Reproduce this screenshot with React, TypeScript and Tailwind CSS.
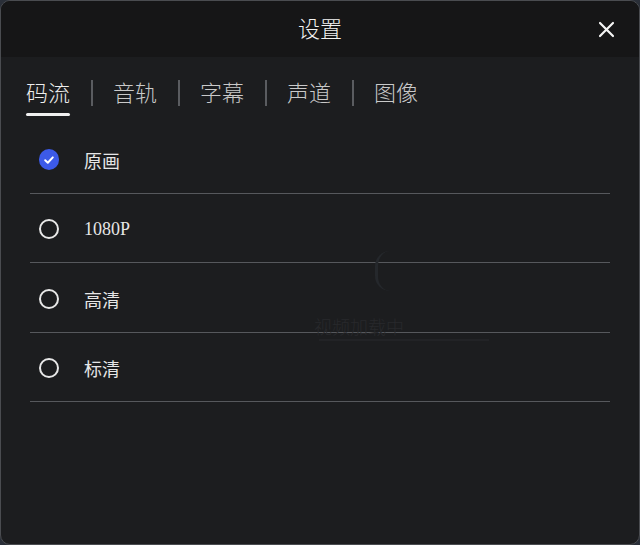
import React from "react";

const tabs = ["码流", "音轨", "字幕", "声道", "图像"];
const options = ["原画", "1080P", "高清", "标清"];

const cjk = { fontFamily: '"Noto Sans CJK SC", "Noto Sans", sans-serif' };

export default function App() {
  return (
    <div className="w-[640px] h-[545px] bg-[#2a2f38]">
      <div
        className="relative w-full h-full rounded-[10px] border border-[#4a4c50] bg-[#1c1d1f] overflow-hidden flex flex-col"
        style={cjk}
      >
        {/* faint background content */}
        <div className="absolute left-[374px] top-[250px] w-[30px] h-[40px] rounded-full border-l-[3px] border-[#25282c]" />
        <div className="absolute left-[313px] top-[312px] text-[18px] text-[#28292c] font-light">视频加载中</div>
        <div className="absolute left-[318px] top-[338px] w-[170px] h-[2px] bg-[#222326]" />

        {/* header */}
        <div className="relative h-[56px] shrink-0 bg-[#161617] flex items-center justify-center pb-[5px]">
          <span className="text-[22px] leading-none text-[#f2f2f2] font-light">设置</span>
          <svg
            className="absolute right-[24px] top-[20px]"
            width="17"
            height="17"
            viewBox="0 0 17 17"
          >
            <path d="M2 2 L15 15 M15 2 L2 15" stroke="#f4f4f4" strokeWidth="2.2" strokeLinecap="round" />
          </svg>
        </div>

        {/* tabs */}
        <div className="relative flex items-center pl-[25px] pt-[17px] h-[55px] shrink-0">
          {tabs.map((t, i) => (
            <React.Fragment key={t}>
              {i > 0 && <div className="w-[2px] h-[26px] bg-[#5a5c60] ml-[21px] mr-[20px]" />}
              <div className="relative">
                <span
                  className={`text-[22px] leading-none font-light ${i === 0 ? "text-[#ededed]" : "text-[#c9c9c9]"}`}
                >
                  {t}
                </span>
                {i === 0 && (
                  <div className="absolute left-0 right-0 top-[33px] h-[3px] rounded-full bg-[#f0f0f0]" />
                )}
              </div>
            </React.Fragment>
          ))}
        </div>

        {/* options */}
        <div className="flex flex-col px-[29px] mt-[12px]">
          {options.map((o, i) => (
            <div
              key={o}
              className="flex items-center h-[69.5px] border-b border-[#56585c] pt-[3px]"
            >
              <div className="w-[20px] h-[20px] ml-[9px] mr-[25px] flex items-center justify-center">
                {i === 0 ? (
                  <div className="w-[21px] h-[21px] rounded-full bg-[#3c5ae8] flex items-center justify-center">
                    <svg width="12" height="12" viewBox="0 0 12 12">
                      <path
                        d="M2.2 6.3 L4.8 8.7 L9.8 3.4"
                        fill="none"
                        stroke="#ffffff"
                        strokeWidth="2"
                        strokeLinecap="round"
                        strokeLinejoin="round"
                      />
                    </svg>
                  </div>
                ) : (
                  <div className="w-[20px] h-[20px] rounded-full border-2 border-[#e8e8e8]" />
                )}
              </div>
              <span
                className="text-[18px] leading-none text-[#e6e6e6]"
                style={
                  o === "1080P"
                    ? { fontFamily: '"Liberation Serif", "Noto Sans CJK SC", serif', fontSize: 18 }
                    : undefined
                }
              >
                {o}
              </span>
            </div>
          ))}
        </div>
      </div>
    </div>
  );
}
